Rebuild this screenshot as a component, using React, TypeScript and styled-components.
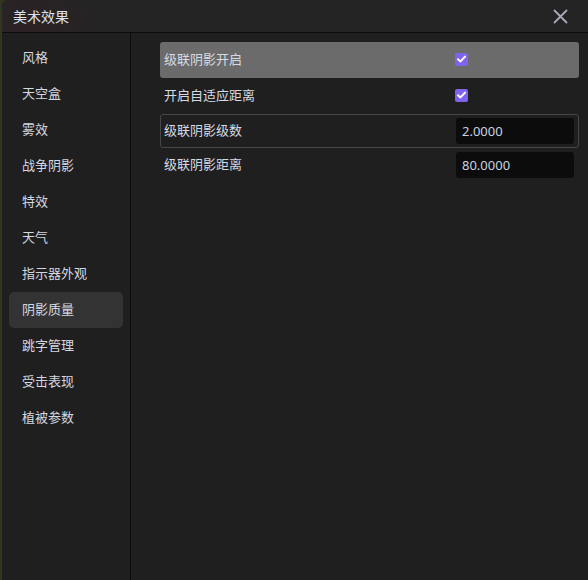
import React, { useState } from 'react'
import styled, { createGlobalStyle } from 'styled-components'

const GlobalStyle = createGlobalStyle`
  html, body {
    margin: 0;
    padding: 0;
    background: #33361f;
  }
  body {
    font-family: "Noto Sans CJK SC", "Noto Sans", sans-serif;
  }
`

const Window = styled.div`
  margin-left: 2px;
  height: 580px;
  background: #1f1f1f;
  border-top-left-radius: 6px;
  display: flex;
  flex-direction: column;
  overflow: hidden;
`

const Header = styled.div`
  height: 32px;
  flex: none;
  display: flex;
  align-items: center;
  justify-content: space-between;
  padding: 0 20px 0 11px;
  background: radial-gradient(circle at 30px 30px, rgba(80, 20, 35, 0.18), transparent 70px), #242424;
  border-bottom: 1px solid #0b0b0b;
`

const Title = styled.div`
  font-size: 14px;
  color: #dce2ee;
  padding-bottom: 1px;
`

const CloseButton = styled.button`
  border: none;
  background: none;
  padding: 0;
  width: 15px;
  height: 15px;
  cursor: pointer;
  display: flex;
`

const Body = styled.div`
  flex: 1;
  display: flex;
`

const Sidebar = styled.div`
  width: 128px;
  flex: none;
  border-right: 1px solid #0b0b0b;
  padding-top: 7px;
  display: flex;
  flex-direction: column;
`

const NavItem = styled.div<{ $active?: boolean }>`
  height: 36px;
  box-sizing: border-box;
  margin: 0 7px;
  padding: 0 0 3px 13px;
  display: flex;
  align-items: center;
  font-size: 13px;
  color: #d4d8e0;
  border-radius: 5px;
  background: ${(p) => (p.$active ? '#333333' : 'transparent')};
  cursor: pointer;
`

const Content = styled.div`
  flex: 1;
  padding: 9px 9px 0 29px;
  display: flex;
  flex-direction: column;
`

const Row = styled.div<{ $hover?: boolean; $focus?: boolean; $tall?: boolean }>`
  height: ${(p) => (p.$tall ? 36 : 34)}px;
  box-sizing: border-box;
  display: grid;
  grid-template-columns: 291px 1fr;
  align-items: center;
  padding: 0 3px;
  border-radius: 3px;
  border: 1px solid ${(p) => (p.$focus ? '#474747' : 'transparent')};
  background: ${(p) => (p.$hover ? '#6b6b6b' : 'transparent')};
`

const Label = styled.div`
  font-size: 13px;
  color: #d6dae2;
  padding-bottom: 3px;
`

const Check = styled.div`
  width: 13px;
  height: 13px;
  margin-bottom: 2px;
  border-radius: 2px;
  background: #7f62f0;
  display: flex;
  align-items: center;
  justify-content: center;
`

const NumberInput = styled.input`
  width: 118px;
  height: 26px;
  margin-left: 1px;
  box-sizing: border-box;
  border: none;
  outline: none;
  border-radius: 3px;
  background: #0c0c0c;
  color: #c9d3e0;
  font-family: "Noto Sans", sans-serif;
  font-size: 13px;
  padding: 0 6px 1px;
`

const navItems = ['风格', '天空盒', '雾效', '战争阴影', '特效', '天气', '指示器外观', '阴影质量', '跳字管理', '受击表现', '植被参数']

const CheckMark = () => (
  <svg width="9" height="8" viewBox="0 0 9 8">
    <path d="M1 4.2 L3.5 6.4 L8 1.6" stroke="#fff" strokeWidth="2" fill="none" strokeLinecap="round" strokeLinejoin="round" />
  </svg>
)

export default function App() {
  const [active, setActive] = useState('阴影质量')
  return (
    <>
      <GlobalStyle />
      <Window>
        <Header>
          <Title>美术效果</Title>
          <CloseButton aria-label="close">
            <svg width="15" height="15" viewBox="0 0 15 15">
              <path d="M1.5 1.5 L13.5 13.5 M13.5 1.5 L1.5 13.5" stroke="#a5a9b8" strokeWidth="1.8" strokeLinecap="round" />
            </svg>
          </CloseButton>
        </Header>
        <Body>
          <Sidebar>
            {navItems.map((n) => (
              <NavItem key={n} $active={n === active} onClick={() => setActive(n)}>
                {n}
              </NavItem>
            ))}
          </Sidebar>
          <Content>
            <Row $hover $tall>
              <Label>级联阴影开启</Label>
              <Check><CheckMark /></Check>
            </Row>
            <Row $tall>
              <Label>开启自适应距离</Label>
              <Check><CheckMark /></Check>
            </Row>
            <Row $focus>
              <Label>级联阴影级数</Label>
              <NumberInput defaultValue="2.0000" />
            </Row>
            <Row>
              <Label>级联阴影距离</Label>
              <NumberInput defaultValue="80.0000" />
            </Row>
          </Content>
        </Body>
      </Window>
    </>
  )
}
